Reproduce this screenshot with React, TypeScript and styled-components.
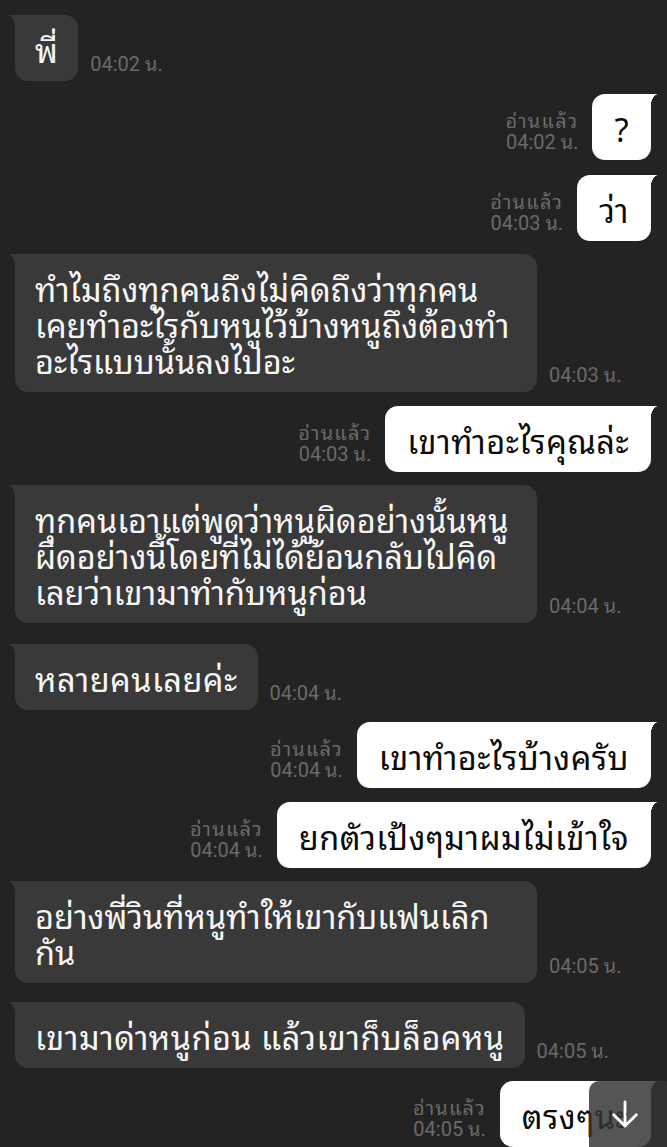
import React from "react";
import styled, { createGlobalStyle } from "styled-components";

const thai = `"Noto Sans Thai Looped", "Loma", "Garuda", "Waree", "Sarabun", "Tahoma", "Noto Sans Thai", "Noto Sans", sans-serif`;

const Global = createGlobalStyle`
  html, body { margin: 0; padding: 0; background: #232323; }
  body { font-family: ${thai}; }
`;

const Page = styled.div`
  position: relative;
  width: 667px;
  height: 1147px;
  overflow: hidden;
  background: #232323;
  box-sizing: border-box;
  padding: 15px 16px 0 15px;
  display: flex;
  flex-direction: column;
`;

const Row = styled.div<{ $out?: boolean; $gap: number }>`
  display: flex;
  align-items: flex-end;
  justify-content: ${(p) => (p.$out ? "flex-end" : "flex-start")};
  margin-top: ${(p) => p.$gap}px;
  flex-shrink: 0;
`;

const Bubble = styled.div<{ $out?: boolean; $wide?: boolean }>`
  position: relative;
  box-sizing: border-box;
  flex-shrink: 0;
  ${(p) => (p.$wide ? "width: 522px;" : "letter-spacing: 0.45px;")}
  padding: 15px ${(p) => (p.$out ? "22px" : "20px")} 15px;
  font-family: ${thai};
  font-size: 32.5px;
  line-height: 36px;
  color: ${(p) => (p.$out ? "#0c0c0c" : "#f6f6f6")};
  background: ${(p) => (p.$out ? "#ffffff" : "#393939")};
  border-radius: ${(p) => (p.$out ? "13px 0 13px 13px" : "0 13px 13px 13px")};
  white-space: pre;

  &::before {
    content: "";
    position: absolute;
    top: 0;
    ${(p) => (p.$out ? "right: -7px;" : "left: -7px;")}
    width: 8px;
    height: 17px;
    background: ${(p) =>
      p.$out
        ? "radial-gradient(ellipse 8px 17px at 100% 100%, transparent 97%, #ffffff 100%)"
        : "radial-gradient(ellipse 8px 17px at 0% 100%, transparent 97%, #393939 100%)"};
  }
`;

const Meta = styled.div<{ $out?: boolean }>`
  display: flex;
  flex-direction: column;
  align-items: ${(p) => (p.$out ? "flex-end" : "flex-start")};
  margin: ${(p) => (p.$out ? "0 14px 7px 0" : "0 0 6px 12px")};
  font-family: Roboto, ${thai};
  font-size: 20px;
  line-height: 21px;
  color: #6a6a6a;
  white-space: nowrap;
  flex-shrink: 0;
`;

const ReadLabel = styled.span`
  font-size: 20px;
  letter-spacing: 1.2px;
`;

const ScrollBtn = styled.div`
  position: absolute;
  right: 0;
  bottom: 0;
  width: 78px;
  height: 66px;
  background: rgba(53, 53, 53, 0.84);
  border-radius: 10px 0 0 0;
  display: flex;
  align-items: center;
  justify-content: center;
  padding-right: 6px;
  box-sizing: border-box;
`;

type Msg = { out?: boolean; wide?: boolean; text: string; time: string; gap: number };

const msgs: Msg[] = [
  { text: "พี่", time: "04:02 น.", gap: 0 },
  { out: true, text: "?", time: "04:02 น.", gap: 13 },
  { out: true, text: "ว่า", time: "04:03 น.", gap: 15 },
  {
    wide: true,
    text: "ทำไมถึงทุกคนถึงไม่คิดถึงว่าทุกคน\nเคยทำอะไรกับหนูไว้บ้างหนูถึงต้องทำ\nอะไรแบบนั้นลงไปอะ",
    time: "04:03 น.",
    gap: 13,
  },
  { out: true, text: "เขาทำอะไรคุณล่ะ", time: "04:03 น.", gap: 14 },
  {
    wide: true,
    text: "ทุกคนเอาแต่พูดว่าหนูผิดอย่างนั้นหนู\nผิดอย่างนี้โดยที่ไม่ได้ย้อนกลับไปคิด\nเลยว่าเขามาทำกับหนูก่อน",
    time: "04:04 น.",
    gap: 13,
  },
  { text: "หลายคนเลยค่ะ", time: "04:04 น.", gap: 21 },
  { out: true, text: "เขาทำอะไรบ้างครับ", time: "04:04 น.", gap: 12 },
  { out: true, text: "ยกตัวเป้งๆมาผมไม่เข้าใจ", time: "04:04 น.", gap: 14 },
  { wide: true, text: "อย่างพี่วินที่หนูทำให้เขากับแฟนเลิก\nกัน", time: "04:05 น.", gap: 13 },
  { text: "เขามาด่าหนูก่อน แล้วเขาก็บล็อคหนู", time: "04:05 น.", gap: 19 },
  { out: true, text: "ตรงๆนะ", time: "04:05 น.", gap: 13 },
];

export default function App() {
  return (
    <>
      <Global />
      <Page>
        {msgs.map((m, i) =>
          m.out ? (
            <Row key={i} $out $gap={m.gap}>
              <Meta $out>
                <ReadLabel>อ่านแล้ว</ReadLabel>
                <span>{m.time}</span>
              </Meta>
              <Bubble $out>{m.text}</Bubble>
            </Row>
          ) : (
            <Row key={i} $gap={m.gap}>
              <Bubble $wide={m.wide}>{m.text}</Bubble>
              <Meta>
                <span>{m.time}</span>
              </Meta>
            </Row>
          )
        )}
        <ScrollBtn>
          <svg width="34" height="34" viewBox="0 0 24 24" fill="none" stroke="#fff" strokeWidth="2" strokeLinecap="round" strokeLinejoin="round">
            <path d="M12 3.5v17M4 12.5l8 8 8-8" />
          </svg>
        </ScrollBtn>
      </Page>
    </>
  );
}
